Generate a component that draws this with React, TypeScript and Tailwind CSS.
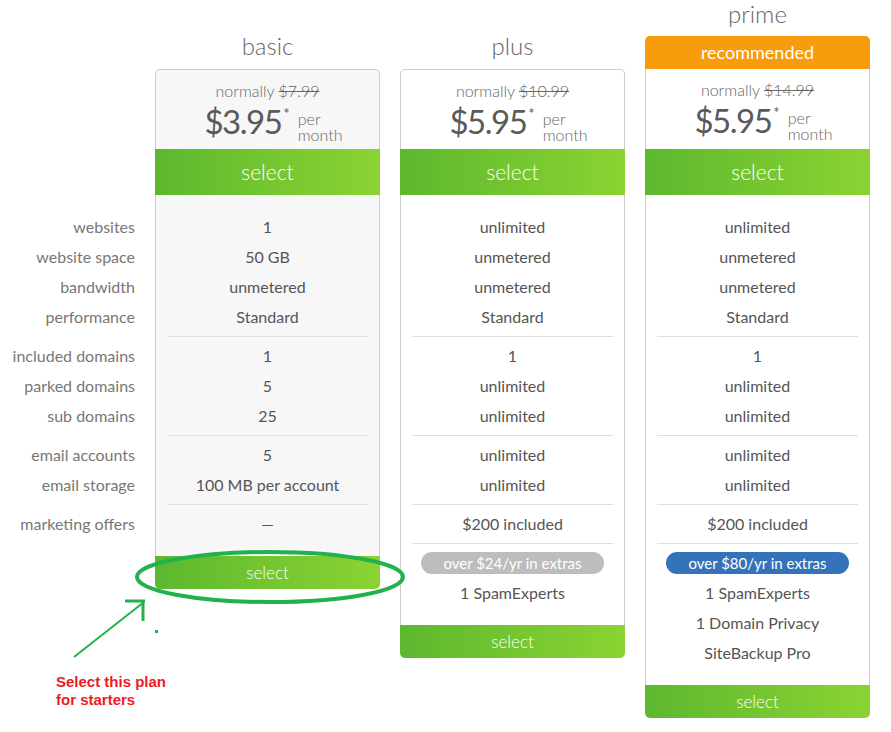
import type { ReactNode } from "react";

type Plan = {
  name: string;
  was: string;
  price: string;
  basic?: boolean;
  recommended?: boolean;
  groups: string[][];
  marketing: string;
  extras?: { badge: string; badgeClass: string; items: string[] };
};

const plans: Plan[] = [
  {
    name: "basic",
    was: "$7.99",
    price: "$3.95",
    basic: true,
    groups: [
      ["1", "50 GB", "unmetered", "Standard"],
      ["1", "5", "25"],
      ["5", "100 MB per account"],
    ],
    marketing: "—",
  },
  {
    name: "plus",
    was: "$10.99",
    price: "$5.95",
    groups: [
      ["unlimited", "unmetered", "unmetered", "Standard"],
      ["1", "unlimited", "unlimited"],
      ["unlimited", "unlimited"],
    ],
    marketing: "$200 included",
    extras: {
      badge: "over $24/yr in extras",
      badgeClass: "bg-[#bdbdbd]",
      items: ["1 SpamExperts"],
    },
  },
  {
    name: "prime",
    was: "$14.99",
    price: "$5.95",
    recommended: true,
    groups: [
      ["unlimited", "unmetered", "unmetered", "Standard"],
      ["1", "unlimited", "unlimited"],
      ["unlimited", "unlimited"],
    ],
    marketing: "$200 included",
    extras: {
      badge: "over $80/yr in extras",
      badgeClass: "bg-[#3473b9]",
      items: ["1 SpamExperts", "1 Domain Privacy", "SiteBackup Pro"],
    },
  },
];

const labels = [
  ["websites", "website space", "bandwidth", "performance"],
  ["included domains", "parked domains", "sub domains"],
  ["email accounts", "email storage"],
  ["marketing offers"],
];

const green = "bg-gradient-to-r from-[#5cb82f] to-[#8bd332]";

function Row({ children }: { children: ReactNode }) {
  return <div className="h-[30px] flex items-center justify-center">{children}</div>;
}

function Divider() {
  return <div className="my-[4px] mx-[11px] h-px bg-[#dedede]" />;
}

function PlanCard({ plan }: { plan: Plan }) {
  return (
    <div className="w-[225px] flex flex-col">
      <div className="h-[69px] flex flex-col justify-end items-stretch">
        <div
          className={`text-center text-[24px] leading-[28px] font-light text-[#666] ${
            plan.recommended ? "mb-[8px]" : "mb-[9px]"
          }`}
        >
          {plan.name}
        </div>
        {plan.recommended && (
          <div className="h-[34px] rounded-t-[5px] bg-[#f89b0c] text-white text-[18px] flex items-center justify-center">
            recommended
          </div>
        )}
      </div>

      <div
        className={`h-[80px] border-x border-[#cdcdcd] flex flex-col items-center pt-[11px] ${
          plan.recommended ? "" : "border-t rounded-t-[5px]"
        } ${plan.basic ? "bg-[#f7f7f7]" : "bg-white"}`}
      >
        <div className="text-[16px] leading-[20px] font-light text-[#666]">
          normally <span className="line-through">{plan.was}</span>
        </div>
        <div className="flex items-start text-[#5a5a5a] ml-[12px] mt-[1px]">
          <span className="text-[33px] leading-[38px] tracking-[-1.5px]">{plan.price}</span>
          <span className="text-[15px] leading-[15px] mt-[4px] ml-[2px] mr-[8px]">*</span>
          <span className="text-[16px] leading-[16px] font-light text-[#666] mt-[9px]">
            per
            <br />
            month
          </span>
        </div>
      </div>

      <div
        className={`h-[46px] ${green} text-white text-[21px] font-light flex items-center justify-center`}
      >
        select
      </div>

      <div
        className={`border-x border-[#cdcdcd] pt-[17px] pb-[17px] text-[16px] text-[#555] ${
          plan.basic ? "bg-[#f7f7f7]" : "bg-white"
        }`}
      >
        {plan.groups.map((g, i) => (
          <div key={i}>
            {g.map((v, j) => (
              <Row key={j}>{v}</Row>
            ))}
            <Divider />
          </div>
        ))}
        <Row>{plan.marketing}</Row>
        {plan.extras && (
          <>
            <Divider />
            <Row>
              <span
                className={`w-[183px] h-[22px] rounded-full ${plan.extras.badgeClass} text-white text-[15px] flex items-center justify-center`}
              >
                {plan.extras.badge}
              </span>
            </Row>
            {plan.extras.items.map((it) => (
              <Row key={it}>{it}</Row>
            ))}
          </>
        )}
      </div>

      <div
        className={`h-[33px] rounded-b-[5px] ${green} text-white text-[17px] font-light flex items-center justify-center`}
      >
        select
      </div>
    </div>
  );
}

export default function App() {
  return (
    <div
      className="relative w-[891px] h-[732px] bg-white overflow-hidden"
      style={{ fontFamily: "Lato, 'Open Sans', sans-serif" }}
    >
      <div className="flex items-start gap-[20px]">
        <div className="w-[135px] pt-[212px] text-right text-[16px] text-[#777]">
          {labels.map((g, i) => (
            <div key={i}>
              {g.map((l) => (
                <div key={l} className="h-[30px] flex items-center justify-end">
                  {l}
                </div>
              ))}
              <div className="h-[9px]" />
            </div>
          ))}
        </div>
        {plans.map((p) => (
          <PlanCard key={p.name} plan={p} />
        ))}
      </div>

      <svg className="absolute left-0 top-0 pointer-events-none" width="891" height="732">
        <ellipse cx="270" cy="577" rx="133" ry="25" fill="none" stroke="#22b14c" strokeWidth="4" />
        <line x1="74" y1="657" x2="144" y2="602" stroke="#22b14c" strokeWidth="2" />
        <line x1="125" y1="601" x2="145" y2="601" stroke="#22b14c" strokeWidth="3" />
        <line x1="143" y1="600" x2="143" y2="621" stroke="#22b14c" strokeWidth="3" />
        <rect x="155" y="630" width="3" height="3" fill="#22b14c" />
      </svg>

      <div
        className="absolute left-[56px] top-[673px] text-[15px] leading-[18px] font-bold text-[#ed1c24]"
        style={{ fontFamily: "'Liberation Sans', Arial, sans-serif" }}
      >
        Select this plan
        <br />
        for starters
      </div>
    </div>
  );
}
